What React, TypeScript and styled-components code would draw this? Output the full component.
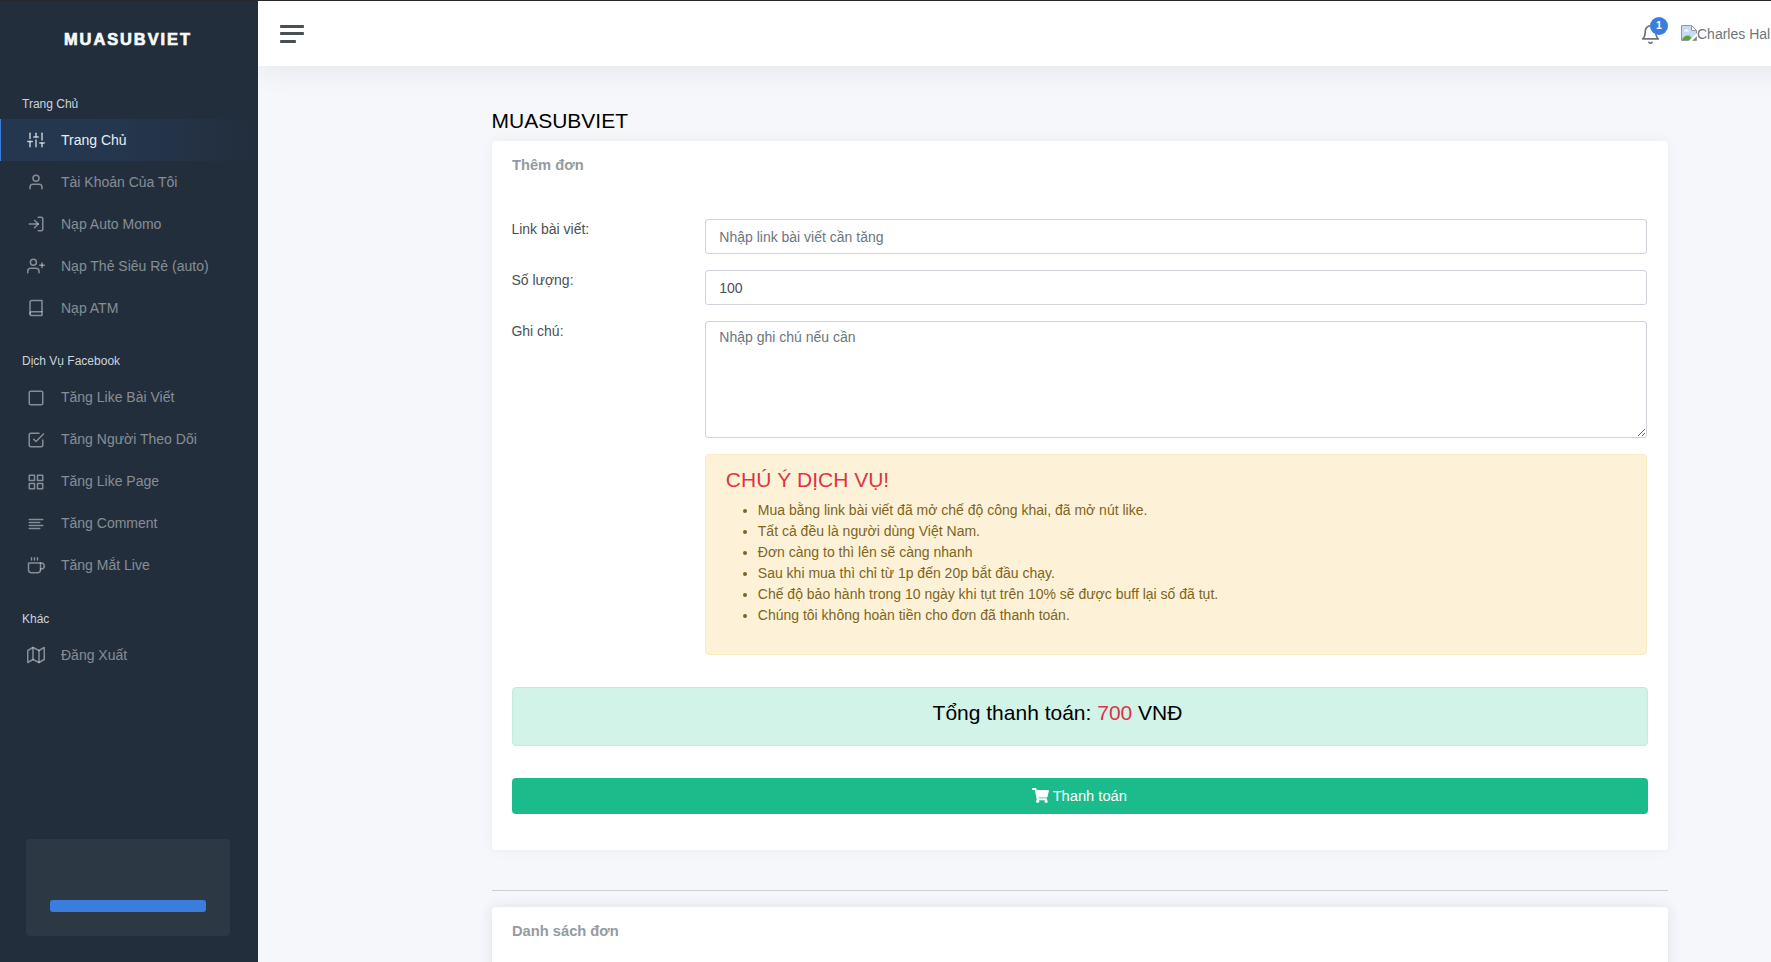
import React from "react";
import styled, { createGlobalStyle, css } from "styled-components";
import type { IconType } from "react-icons";
import {
  FiAlignLeft,
  FiBell,
  FiBook,
  FiCheckSquare,
  FiCoffee,
  FiGrid,
  FiLogIn,
  FiMap,
  FiSliders,
  FiSquare,
  FiUser,
  FiUserPlus,
} from "react-icons/fi";
import { FaShoppingCart } from "react-icons/fa";

const GlobalStyle = createGlobalStyle`
  *, *::before, *::after { box-sizing: border-box; }
  body {
    margin: 0;
    overflow: hidden;
    background: #f5f7fb;
    color: #495057;
    font-family: "Liberation Sans", Arial, sans-serif;
    font-size: 14px;
    line-height: 21px;
  }
`;

const Page = styled.div`
  display: flex;
  height: 962px;
  overflow: hidden;
  border-top: 1px solid #26282d;
`;

const Sidebar = styled.nav`
  position: relative;
  z-index: 2;
  display: flex;
  flex-direction: column;
  flex: 0 0 258px;
  background: #222e3c;
`;

const Brand = styled.a`
  padding: 27px 0 0 64px;
  height: 84px;
  color: #f8f9fa;
  font-size: 16.4px;
  font-weight: 700;
  line-height: 22px;
  letter-spacing: 1.95px;
  -webkit-text-stroke: 0.7px #f8f9fa;
`;

const NavGroup = styled.section`
  margin-bottom: 13px;
`;

const NavHeading = styled.h6`
  margin: 0;
  padding: 10px 22px 0;
  height: 34.4px;
  color: #ced4da;
  font-size: 12px;
  font-weight: 400;
  line-height: 18px;
`;

const NavLink = styled.a<{ $active?: boolean }>`
  display: flex;
  align-items: center;
  gap: 16px;
  height: 42px;
  padding-left: 26px;
  border-left: 1px solid transparent;
  color: rgba(233, 236, 239, 0.5);

  svg {
    width: 18px;
    height: 18px;
    flex: none;
  }

  ${(p) =>
    p.$active &&
    css`
      color: #e9ecef;
      border-left-color: #3b7ddd;
      background: linear-gradient(
        90deg,
        rgba(59, 125, 221, 0.12),
        rgba(59, 125, 221, 0.1) 50%,
        transparent
      );
      svg {
        color: rgba(233, 236, 239, 0.8);
      }
    `}
`;

const PromoCard = styled.div`
  margin: auto 28px 26px 26px;
  padding: 61px 24px 24px;
  height: 97px;
  border-radius: 4px;
  background: #2c3945;
`;

const PromoButton = styled.div`
  height: 12px;
  border-radius: 3px;
  background: #3b7ddd;
`;

const Main = styled.div`
  display: flex;
  flex-direction: column;
  flex: 1;
  min-width: 0;
`;

const TopBar = styled.header`
  display: flex;
  align-items: center;
  flex: 0 0 65px;
  margin-right: -60px;
  padding: 0 60px 0 22px;
  background: #fff;
  box-shadow: 0 0 32px 0 rgba(33, 37, 41, 0.1);
`;

const MenuToggle = styled.div`
  display: flex;
  flex-direction: column;
  width: 24px;
  height: 18px;
  margin-right: auto;
`;

const MenuBar = styled.span<{ $short?: boolean; $gap?: number }>`
  height: 3px;
  width: ${(p) => (p.$short ? 16 : 24)}px;
  margin-top: ${(p) => p.$gap ?? 0}px;
  border-radius: 1px;
  background: #495057;
`;

const Bell = styled.div`
  position: relative;
  width: 21px;
  height: 21px;
  margin: 1px 20px 0 0;
  color: #6c757d;

  svg {
    display: block;
    width: 21px;
    height: 21px;
  }
`;

const Badge = styled.span`
  position: absolute;
  top: -7px;
  left: 10px;
  width: 18px;
  height: 18px;
  border-radius: 50%;
  background: #3b7ddd;
  color: #fff;
  font-size: 10.5px;
  font-weight: 700;
  line-height: 17px;
  text-align: center;
`;

const Profile = styled.div`
  display: flex;
  align-items: center;
  width: 90px;
  padding-top: 1px;
  white-space: nowrap;
  color: #6c757d;

  svg {
    flex: none;
    margin-bottom: 3px;
  }
`;

const Content = styled.main`
  width: 1176px;
  margin-left: 234px;
  padding-top: 42px;
`;

const PageTitle = styled.h3`
  margin: 0 0 8px -0.5px;
  color: #000;
  font-size: 21px;
  font-weight: 400;
  line-height: 25px;
`;

const Card = styled.section<{ $height: number; $shade: number }>`
  height: ${(p) => p.$height}px;
  padding: 15px 20px 0;
  border-radius: 4px;
  background: #fff;
  box-shadow: 0 0 14px 0 rgba(33, 37, 41, ${(p) => p.$shade});
`;

const CardTitle = styled.h5`
  margin: 0;
  color: #939ba2;
  font-size: 14.7px;
  font-weight: 700;
  line-height: 18px;
`;

const Form = styled.form`
  display: flex;
  flex-direction: column;
  gap: 16px;
  margin: 45px 1px 0 0;
`;

const FormRow = styled.div`
  display: grid;
  grid-template-columns: 193px 1fr;
  align-items: start;
`;

const FieldLabel = styled.label`
  margin-left: -0.6px;
`;

const fieldStyle = css`
  display: block;
  width: 100%;
  border: 1px solid #ced4da;
  border-radius: 3px;
  background: #fff;
  color: #495057;
  font: inherit;
  outline: none;

  &::placeholder {
    color: #6c757d;
    opacity: 1;
  }
`;

const TextField = styled.input`
  ${fieldStyle}
  height: 35px;
  padding: 1px 13.3px 0;
`;

const NoteField = styled.textarea`
  ${fieldStyle}
  height: 117px;
  padding: 5px 13.3px;
  resize: vertical;
`;

const Notice = styled.div`
  grid-column: 2;
  height: 201px;
  padding: 12px 19.8px;
  border: 1px solid #fbebc1;
  border-radius: 4px;
  background: #fdf2d8;
  color: #806420;
`;

const NoticeTitle = styled.h4`
  margin: 0 0 8px;
  color: #dc3545;
  font-size: 21px;
  font-weight: 400;
  line-height: 25px;
`;

const NoticeList = styled.ul`
  margin: 0;
  padding-left: 32px;
`;

const Total = styled.div`
  height: 59px;
  margin-top: 32px;
  padding: 12px 64px 0 19px;
  border: 1px solid #bfeedf;
  border-radius: 4px;
  background: #d2f3e8;
  color: #000;
  font-size: 21px;
  line-height: 25px;
  text-align: center;
`;

const Amount = styled.span`
  color: #dc3545;
`;

const PayButton = styled.button`
  display: flex;
  align-items: center;
  justify-content: center;
  gap: 4px;
  width: 100%;
  height: 36px;
  margin-top: 32px;
  padding: 0 1.4px 0 0;
  border: 0;
  border-radius: 4px;
  background: #1cbb8c;
  color: #fff;
  font: inherit;
  font-size: 14.7px;

  svg {
    width: 17px;
    height: 15px;
    margin-bottom: 1px;
  }
`;

const Divider = styled.hr`
  height: 1px;
  margin: 40px 0 16px;
  border: 0;
  background: #cbced3;
`;

const BrokenImage = () => (
  <svg width="16" height="16" viewBox="0 0 16 16">
    <path d="M.5 .5h10l5 5v10H.5z" fill="#c6d9f7" stroke="#9a9a9a" />
    <path d="M10.5 .5v5h5z" fill="#fff" stroke="#9a9a9a" />
    <path d="M3 6.5c0-1 .8-1.5 1.5-1.5.4-1 2-1 2.300.2.9 0 1.2.7 1.2 1.3z" fill="#fff" />
    <path d="M1 15c1-3.5 4-5 6.5-4.5 1.5.3 3 1.5 3.5 4.5z" fill="#57a639" />
    <path d="M11 15l4-3.5V15z" fill="#57a639" />
    <path d="M7.5 16L16 8v3l-5 5z" fill="#fff" />
  </svg>
);

type NavItem = { label: string; icon: IconType; active?: boolean };

const groups: { heading: string; items: NavItem[] }[] = [
  {
    heading: "Trang Chủ",
    items: [
      { label: "Trang Chủ", icon: FiSliders, active: true },
      { label: "Tài Khoản Của Tôi", icon: FiUser },
      { label: "Nạp Auto Momo", icon: FiLogIn },
      { label: "Nạp Thẻ Siêu Rẻ (auto)", icon: FiUserPlus },
      { label: "Nạp ATM", icon: FiBook },
    ],
  },
  {
    heading: "Dịch Vụ Facebook",
    items: [
      { label: "Tăng Like Bài Viết", icon: FiSquare },
      { label: "Tăng Người Theo Dõi", icon: FiCheckSquare },
      { label: "Tăng Like Page", icon: FiGrid },
      { label: "Tăng Comment", icon: FiAlignLeft },
      { label: "Tăng Mắt Live", icon: FiCoffee },
    ],
  },
  { heading: "Khác", items: [{ label: "Đăng Xuất", icon: FiMap }] },
];

const notices = [
  "Mua bằng link bài viết đã mở chế độ công khai, đã mở nút like.",
  "Tất cả đều là người dùng Việt Nam.",
  "Đơn càng to thì lên sẽ càng nhanh",
  "Sau khi mua thì chỉ từ 1p đến 20p bắt đầu chạy.",
  "Chế độ bảo hành trong 10 ngày khi tụt trên 10% sẽ được buff lại số đã tụt.",
  "Chúng tôi không hoàn tiền cho đơn đã thanh toán.",
];

export default function App() {
  return (
    <>
      <GlobalStyle />
      <Page>
        <Sidebar>
          <Brand>MUASUBVIET</Brand>
          {groups.map((group) => (
            <NavGroup key={group.heading}>
              <NavHeading>{group.heading}</NavHeading>
              {group.items.map(({ label, icon: Icon, active }) => (
                <NavLink key={label} $active={active}>
                  <Icon />
                  {label}
                </NavLink>
              ))}
            </NavGroup>
          ))}
          <PromoCard>
            <PromoButton />
          </PromoCard>
        </Sidebar>
        <Main>
          <TopBar>
            <MenuToggle>
              <MenuBar />
              <MenuBar $gap={4} />
              <MenuBar $gap={5} $short />
            </MenuToggle>
            <Bell>
              <FiBell />
              <Badge>1</Badge>
            </Bell>
            <Profile>
              <BrokenImage />
              Charles Hal
            </Profile>
          </TopBar>
          <Content>
            <PageTitle>MUASUBVIET</PageTitle>
            <Card $height={709} $shade={0.05}>
              <CardTitle>Thêm đơn</CardTitle>
              <Form>
                <FormRow>
                  <FieldLabel htmlFor="link">Link bài viết:</FieldLabel>
                  <TextField id="link" placeholder="Nhập link bài viết cần tăng" />
                </FormRow>
                <FormRow>
                  <FieldLabel htmlFor="amount">Số lượng:</FieldLabel>
                  <TextField id="amount" defaultValue="100" />
                </FormRow>
                <FormRow>
                  <FieldLabel htmlFor="note">Ghi chú:</FieldLabel>
                  <NoteField id="note" placeholder="Nhập ghi chú nếu cần" />
                </FormRow>
                <FormRow>
                  <Notice>
                    <NoticeTitle>CHÚ Ý DỊCH VỤ!</NoticeTitle>
                    <NoticeList>
                      {notices.map((text) => (
                        <li key={text}>{text}</li>
                      ))}
                    </NoticeList>
                  </Notice>
                </FormRow>
              </Form>
              <Total>
                Tổng thanh toán: <Amount>700</Amount> VNĐ
              </Total>
              <PayButton type="button">
                <FaShoppingCart />
                Thanh toán
              </PayButton>
            </Card>
            <Divider />
            <Card $height={200} $shade={0.1}>
              <CardTitle>Danh sách đơn</CardTitle>
            </Card>
          </Content>
        </Main>
      </Page>
    </>
  );
}
